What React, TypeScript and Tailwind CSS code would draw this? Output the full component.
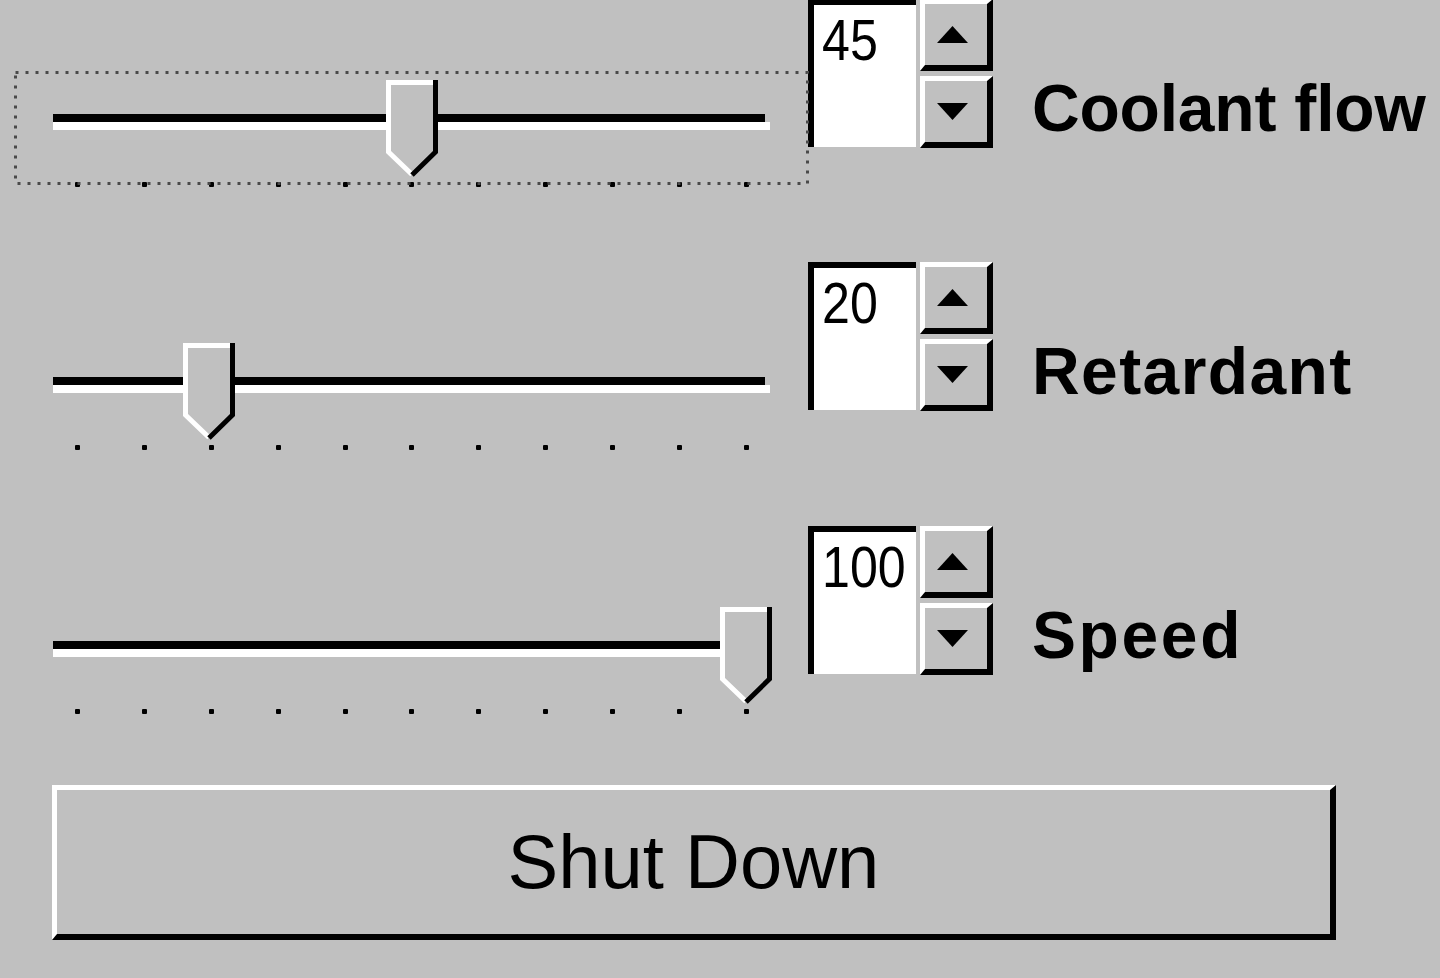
import React from "react";

const FONT = '"Liberation Sans", Arial, sans-serif';

type Row = {
  value: string;
  label: string;
  thumbLeft: number;
  focused?: boolean;
  h: string;
  track: string;
};

const rows: Row[] = [
  { value: "45", label: "Coolant flow", thumbLeft: 386, focused: true, h: "h-[263px]", track: "tracking-[-0.2px]" },
  { value: "20", label: "Retardant", thumbLeft: 183, h: "h-[264px]", track: "tracking-[1.4px]" },
  { value: "100", label: "Speed", thumbLeft: 720, h: "h-[259px]", track: "tracking-[2.6px]" },
];

function Thumb({ left }: { left: number }) {
  return (
    <svg
      width="52"
      height="97"
      viewBox="0 0 52 97"
      className="absolute top-[81px]"
      style={{ left }}
    >
      <polygon points="0,0 52,0 52,72 26,97 0,72" fill="#c0c0c0" />
      <polyline
        points="26,94.5 2.5,72 2.5,2.5 49.5,2.5"
        fill="none"
        stroke="#ffffff"
        strokeWidth="5"
      />
      <polyline
        points="49.5,-1 49.5,72 26,95"
        fill="none"
        stroke="#000000"
        strokeWidth="5"
      />
    </svg>
  );
}

function Slider({ thumbLeft, focused }: { thumbLeft: number; focused?: boolean }) {
  return (
    <div className="relative w-[808px] shrink-0 pt-[115px] pl-[53px]">
      {focused && (
        <svg
          width="795"
          height="114"
          className="absolute left-[14px] top-[72px]"
          viewBox="0 0 795 114"
        >
          <rect
            x="1.5"
            y="1.5"
            width="792"
            height="111"
            fill="none"
            stroke="#4a4a4a"
            strokeWidth="3"
            strokeDasharray="3 7"
          />
        </svg>
      )}
      <div className="w-[712px] h-[8px] bg-black" />
      <div className="w-[717px] h-[8px] bg-white" />
      <div className="ml-[22px] mt-[52px] flex w-[674px] justify-between">
        {Array.from({ length: 11 }).map((_, i) => (
          <div key={i} className="h-[5px] w-[5px] rounded-[1px] bg-black" />
        ))}
      </div>
      <Thumb left={thumbLeft} />
    </div>
  );
}

function UpArrow() {
  return (
    <svg width="31" height="17" viewBox="0 0 31 17">
      <polygon points="0,17 31,17 15.5,0" fill="#000" />
    </svg>
  );
}

function DownArrow() {
  return (
    <svg width="31" height="17" viewBox="0 0 31 17">
      <polygon points="0,0 31,0 15.5,17" fill="#000" />
    </svg>
  );
}

function Spin({ value }: { value: string }) {
  return (
    <div className="flex shrink-0">
      <div className="h-[148px] w-[108px] border-l-[6px] border-t-[6px] border-black bg-white pl-[8px] pt-[7px]">
        <span
          className="inline-block origin-left scale-x-[0.88] text-[57px] leading-none text-black"
          style={{ fontFamily: FONT }}
        >
          {value}
        </span>
      </div>
      <div className="ml-[4px] flex flex-col">
        <div className="flex h-[72px] w-[73px] items-center justify-center border-l-[5px] border-t-[5px] border-b-[6px] border-r-[6px] border-l-white border-t-white border-b-black border-r-black bg-[#c0c0c0] pr-[8px]">
          <UpArrow />
        </div>
        <div className="mt-[5px] flex h-[72px] w-[73px] items-center justify-center border-l-[5px] border-t-[5px] border-b-[6px] border-r-[6px] border-l-white border-t-white border-b-black border-r-black bg-[#c0c0c0] pr-[8px]">
          <DownArrow />
        </div>
      </div>
    </div>
  );
}

export default function App() {
  return (
    <div
      className="h-[978px] w-[1440px] overflow-hidden bg-[#c0c0c0] text-black"
      style={{ fontFamily: FONT }}
    >
      <div className="-mt-px flex flex-col">
        {rows.map((r) => (
          <div key={r.label} className={`flex ${r.h}`}>
            <Slider thumbLeft={r.thumbLeft} focused={r.focused} />
            <Spin value={r.value} />
            <div className={`ml-[39px] mt-[76px] whitespace-nowrap text-[66px] font-bold leading-none ${r.track}`}>
              {r.label}
            </div>
          </div>
        ))}
        <div className="ml-[52px] flex h-[155px] w-[1284px] items-center justify-center border-l-[5px] border-t-[5px] border-b-[6px] border-r-[6px] border-l-white border-t-white border-b-black border-r-black bg-[#c0c0c0]">
          <span className="text-[76px] leading-none">Shut Down</span>
        </div>
      </div>
    </div>
  );
}
